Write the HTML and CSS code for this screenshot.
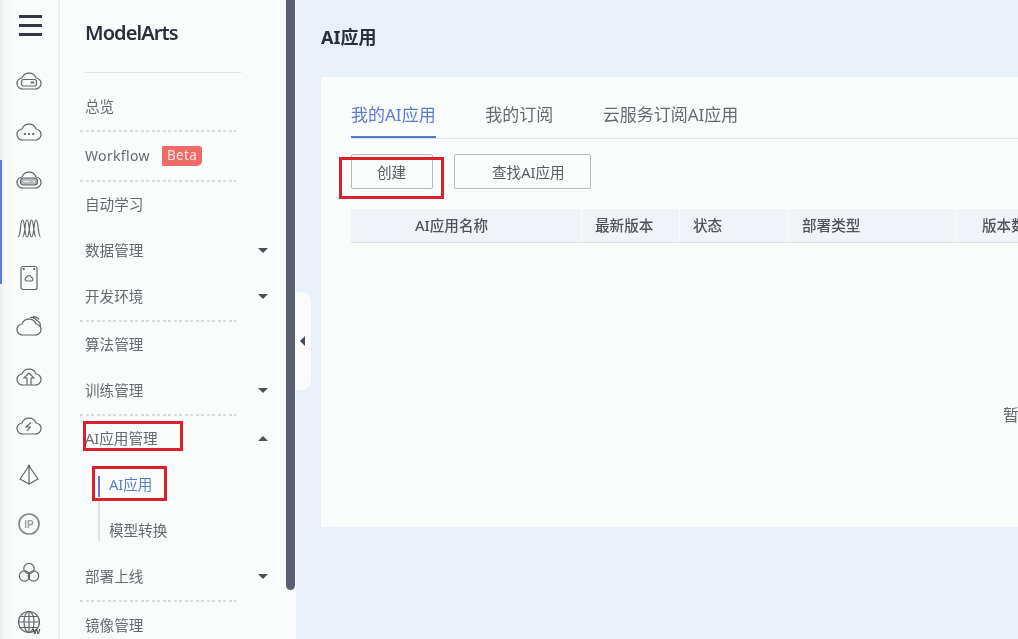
FILE: index.html
```html
<!DOCTYPE html>
<html lang="zh">
<head>
<meta charset="utf-8">
<title>ModelArts AI应用</title>
<link rel="stylesheet" href="styles.css">
</head>
<body>
<div class="app">
  <nav class="rail">
    <div class="rail-accent"></div>
    <button class="burger"><span></span><span></span><span></span></button>
    <div class="rail-icon"><svg viewBox="0 0 28 28"><path d="M8 22a5.500 5.500 0 0 1-1-11a7.500 7.500 0 0 1 14 0a5.500 5.500 0 0 1-1 11z"/><rect x="6.500" y="12.500" width="15" height="6.500" rx="2"/><path class="thick" d="M16.500 15.500h2"/></svg></div>
    <div class="rail-icon"><svg viewBox="0 0 28 28"><path d="M8 23a5.500 5.500 0 0 1-1-11a7.500 7.500 0 0 1 14 0a5.500 5.500 0 0 1-1 11z"/><path class="thick" d="M9.500 17h.6M13.700 17h.6M17.900 17h.6"/></svg></div>
    <div class="rail-icon"><svg viewBox="0 0 28 28"><path d="M8 22a5.500 5.500 0 0 1-1-11a7.500 7.500 0 0 1 14 0a5.500 5.500 0 0 1-1 11z"/><rect class="solid" x="5.500" y="12" width="17" height="7" rx="3"/><path class="light" d="M8.500 15.500h6M18 15.500h2"/></svg></div>
    <div class="rail-icon"><svg viewBox="0 0 28 28"><path d="M3 22c3 0 2-17 4.500-17s2 17 4.500 17M7.500 22c3 0 2-17 4.500-17s2 17 4.500 17M12 22c3 0 2-17 4.500-17s2 17 4.500 17M16.500 22c3 0 2-17 4.500-17s2 17 4.500 17"/></svg></div>
    <div class="rail-icon"><svg viewBox="0 0 28 28"><rect x="6" y="2.500" width="16" height="23" rx="2"/><path d="M11.500 17a1.800 1.800 0 0 1 0-3.500a2.600 2.600 0 0 1 5 0a1.800 1.800 0 0 1 0 3.500z"/><path class="thick" d="M8.500 5h.5M19 5h.5"/></svg></div>
    <div class="rail-icon"><svg viewBox="0 0 28 28"><path d="M8 22a5.500 5.500 0 0 1-1-11a7.500 7.500 0 0 1 14 0a5.500 5.500 0 0 1-1 11z"/><path d="M15 4.500a7 7 0 0 1 7 3a5 5 0 0 1 3 6.500M18 3.500a7 7 0 0 1 6 3"/></svg></div>
    <div class="rail-icon"><svg viewBox="0 0 28 28"><path d="M8 22a5.500 5.500 0 0 1-1-11a7.500 7.500 0 0 1 14 0a5.500 5.500 0 0 1-1 11z"/><path d="M14 10l-5 5h3v7M14 10l5 5h-3v7"/></svg></div>
    <div class="rail-icon"><svg viewBox="0 0 28 28"><path d="M8 22a5.500 5.500 0 0 1-1-11a7.500 7.500 0 0 1 14 0a5.500 5.500 0 0 1-1 11z"/><path d="M16 10.500l-5 4.500h4l-3 4"/></svg></div>
    <div class="rail-icon"><svg viewBox="0 0 28 28"><path d="M14 5L5 18l9 5 9-5zM14 5v18"/><circle class="dot" cx="14" cy="5" r="1.300"/></svg></div>
    <div class="rail-icon"><svg viewBox="0 0 28 28"><circle class="ring" cx="14" cy="14" r="10"/><text x="14" y="17.800" class="ip">IP</text></svg></div>
    <div class="rail-icon"><svg viewBox="0 0 28 28"><circle cx="14" cy="9.500" r="5.200"/><circle cx="9.500" cy="17" r="5.200"/><circle cx="18.500" cy="17" r="5.200"/></svg></div>
    <div class="rail-icon"><svg viewBox="0 0 28 28"><circle cx="14" cy="14" r="10.500"/><ellipse cx="14" cy="14" rx="5" ry="10.500"/><path d="M14 3.500v21M3.500 14h21M5 8.500h18M5 19.500h18"/><text x="21.500" y="26" class="w">W</text></svg></div>
  </nav>

  <aside class="sidebar">
    <header class="brand"><h1>ModelArts</h1></header>
    <div class="nav-row first">总览</div>
    <div class="sep"></div>
    <div class="nav-row workflow">Workflow<span class="beta">Beta</span></div>
    <div class="sep"></div>
    <div class="nav-row h45">自动学习</div>
    <div class="nav-row h46">数据管理<i class="caret"></i></div>
    <div class="nav-row h47">开发环境<i class="caret"></i></div>
    <div class="sep"></div>
    <div class="nav-row h45">算法管理</div>
    <div class="nav-row h47">训练管理<i class="caret"></i></div>
    <div class="sep"></div>
    <div class="nav-row h45">AI应用管理<i class="caret up"></i><span class="mark mark-group"></span></div>
    <div class="sub-list">
      <div class="sub-item active">AI应用<span class="mark mark-sub"></span></div>
      <div class="sub-item second">模型转换</div>
    </div>
    <div class="nav-row h47">部署上线<i class="caret"></i></div>
    <div class="sep"></div>
    <div class="nav-row h46 last">镜像管理</div>
    <div class="scrollbar"></div>
  </aside>

  <main class="main">
    <div class="handle"><i></i></div>
    <h2 class="page-title">AI应用</h2>
    <section class="card">
      <div class="tabs">
        <div class="tab current">我的AI应用</div>
        <div class="tab">我的订阅</div>
        <div class="tab">云服务订阅AI应用</div>
      </div>
      <div class="toolbar">
        <button class="btn btn-create">创建<span class="mark mark-create"></span></button>
        <button class="btn btn-find">查找AI应用</button>
      </div>
      <div class="table-head">
        <div class="th th-name">AI应用名称</div>
        <div class="th">最新版本</div>
        <div class="th">状态</div>
        <div class="th">部署类型</div>
        <div class="th th-count">版本数量</div>
      </div>
      <div class="empty">暂无数据</div>
    </section>
  </main>
</div>
</body>
</html>
```
FILE: styles.css
```css
* { box-sizing: border-box; }
html, body { margin: 0; height: 100%; overflow: hidden; }
body {
  font-family: "Noto Sans", "Noto Sans CJK SC", sans-serif;
  color: #666a70;
  font-size: 14.6px;
}
.app {
  display: flex;
  width: 1018px;
  height: 639px;
  overflow: hidden;
  background: #e9f0f9;
  filter: blur(0.45px);
}

/* icon rail */
.rail {
  position: relative;
  flex: none;
  width: 60px;
  height: 100%;
  background: linear-gradient(90deg, #eceeee 0, #f6f8f7 5px, #f9fcfa 12px);
  border-right: 2px solid #eef0ef;
  display: flex;
  flex-direction: column;
  align-items: center;
}
.rail-accent {
  position: absolute;
  left: 0;
  top: 160px;
  width: 2px;
  height: 124px;
  background: #5b7bd0;
}
.burger {
  flex: none;
  width: 23px;
  height: 56.800px;
  padding: 15px 0 0;
  margin: 0 0 0 2px;
  border: 0;
  background: none;
  display: flex;
  flex-direction: column;
  gap: 6.500px;
}
.burger span { display: block; width: 23px; height: 2.500px; background: #33373f; }
.rail-icon {
  flex: none;
  height: 49.200px;
  width: 28px;
  display: flex;
  align-items: center;
}
.rail-icon svg { width: 28px; height: 28px; fill: none; stroke: #62666a; stroke-width: 1.2; }
.rail-icon .thick { stroke-width: 1.8; stroke-linecap: round; }
.rail-icon .solid { fill: #b4b8ba; }
.rail-icon .light { stroke: #eef0f0; }
.rail-icon .dot { fill: #62666a; stroke: none; }
.rail-icon .ring { stroke: #85898c; stroke-width: 1.7; }
.rail-icon .ip { font: 700 10px "Liberation Sans", sans-serif; text-anchor: middle; fill: #9a9ea1; stroke: none; }
.rail-icon .w { font: 700 8px "Liberation Sans", sans-serif; text-anchor: middle; fill: #3c4044; stroke: none; }

/* sidebar */
.sidebar {
  position: relative;
  flex: none;
  width: 236px;
  height: 100%;
  overflow: hidden;
  background: #f9fcfa;
}
.brand {
  height: 82px;
  margin: 0 55px 0 25px;
  padding-top: 19px;
  position: relative;
}
.brand::after {
  content: "";
  position: absolute;
  left: 0;
  right: 0;
  top: 72px;
  height: 1px;
  background: #dde2e2;
}
.brand h1 {
  margin: 0;
  font-size: 20px;
  line-height: 28px;
  font-weight: 600;
  color: #2a2f38;
  letter-spacing: -0.9px;
}
.nav-row {
  position: relative;
  display: flex;
  align-items: center;
  justify-content: space-between;
  width: 183px;
  height: 48px;
  margin-left: 25px;
}
.nav-row.first { padding-bottom: 1px; }
.h45, .h46, .h47 { padding-bottom: 3px; }
.h45 { height: 45px; }
.h46 { height: 46px; padding-bottom: 2px; }
.h47 { height: 47px; }
.nav-row.last { padding-bottom: 1px; }
.sep {
  width: 156px;
  height: 2px;
  margin-left: 20px;
  background-image: repeating-linear-gradient(90deg, #d8dddc 0 3px, transparent 3px 5.500px);
}
.workflow { justify-content: flex-start; font-size: 14px; letter-spacing: 0.35px; padding-bottom: 1px; }
.beta {
  margin-left: 12px;
  padding: 0 5px;
  height: 20px;
  line-height: 19px;
  font-size: 13.500px;
  letter-spacing: 0.4px;
  color: #fde3df;
  background: #ef6b68;
  border-radius: 1px 3px 5px 1px;
}
.caret {
  width: 0;
  height: 0;
  margin-top: 3px;
  border-left: 5px solid transparent;
  border-right: 5px solid transparent;
  border-top: 5.500px solid #4b5059;
}
.caret.up { border-top: 0; border-bottom: 5.500px solid #4b5059; }
.h46 .caret { margin-top: 2px; }
.sub-list {
  width: 120px;
  height: 65px;
  margin: 15px 0 12px 38px;
  border-left: 2px solid #dfe3e3;
}
.sub-item {
  position: relative;
  height: 21px;
  line-height: 17px;
  padding-left: 9px;
}
.sub-item.active {
  margin-left: -2px;
  border-left: 2px solid #5b7bd0;
  color: #5b7bd0;
}
.sub-item.second { margin-top: 23px; line-height: 21px; }
.scrollbar {
  position: absolute;
  left: 226px;
  top: -6px;
  width: 9px;
  height: 596px;
  border-radius: 5px;
  background: #5b6170;
}

/* red annotation frames */
.mark { position: absolute; border: 3px solid #d9202b; }
.mark-group { left: -2px; top: 5px; width: 100px; height: 30px; }
.mark-sub { left: -8px; top: -10px; width: 75px; height: 35px; }
.mark-create { left: -13px; top: 2px; width: 105px; height: 42px; }

/* main */
.main {
  position: relative;
  flex: none;
  width: 722px;
  height: 100%;
  padding: 0 0 0 25px;
  overflow: hidden;
}
.handle {
  position: absolute;
  left: 0;
  top: 292px;
  width: 15px;
  height: 98px;
  border-radius: 0 9px 9px 0;
  background: #f9fcfa;
  display: flex;
  align-items: center;
  padding-left: 4px;
}
.handle i {
  width: 0;
  height: 0;
  border-top: 5px solid transparent;
  border-bottom: 5px solid transparent;
  border-right: 5px solid #444a54;
}
.page-title {
  margin: 0;
  height: 77px;
  padding-top: 24px;
  font-size: 18px;
  line-height: 26px;
  font-weight: 700;
  color: #2a2f38;
}
.card {
  position: relative;
  width: 1000px;
  height: 450px;
  padding: 24px 30px 0;
  background: #f9fcfa;
}
.tabs {
  display: flex;
  gap: 49.500px;
  height: 38px;
  border-bottom: 1px solid #dfe3e3;
  font-size: 17px;
}
.tab { height: 37px; line-height: 28px; }
.tab.current { color: #5b7bd0; border-bottom: 2px solid #5b7bd0; height: 37px; }
.toolbar { display: flex; gap: 21px; margin-top: 15px; }
.btn {
  position: relative;
  height: 35px;
  padding: 0;
  border: 1px solid #b5b9bb;
  border-radius: 2px;
  background: #f9fcfa;
  color: #575b62;
  font: inherit;
  text-align: left;
}
.btn-create { width: 82px; padding-left: 25px; }
.btn-find { width: 137px; padding-left: 37px; }
.table-head {
  display: grid;
  grid-template-columns: 230px 97px 108px 167px 1fr;
  gap: 1px;
  height: 34px;
  margin-top: 20px;
  border-bottom: 1px solid #dfe3e3;
  font-weight: 500;
  color: #4e535c;
}
.th { background: #f0f4f8; line-height: 32px; padding-left: 13px; }
.th-name { padding-left: 64px; }
.th-count { padding-left: 25px; }
.empty { position: absolute; left: 682px; top: 326px; font-size: 16px; line-height: 24px; white-space: nowrap; }
```
